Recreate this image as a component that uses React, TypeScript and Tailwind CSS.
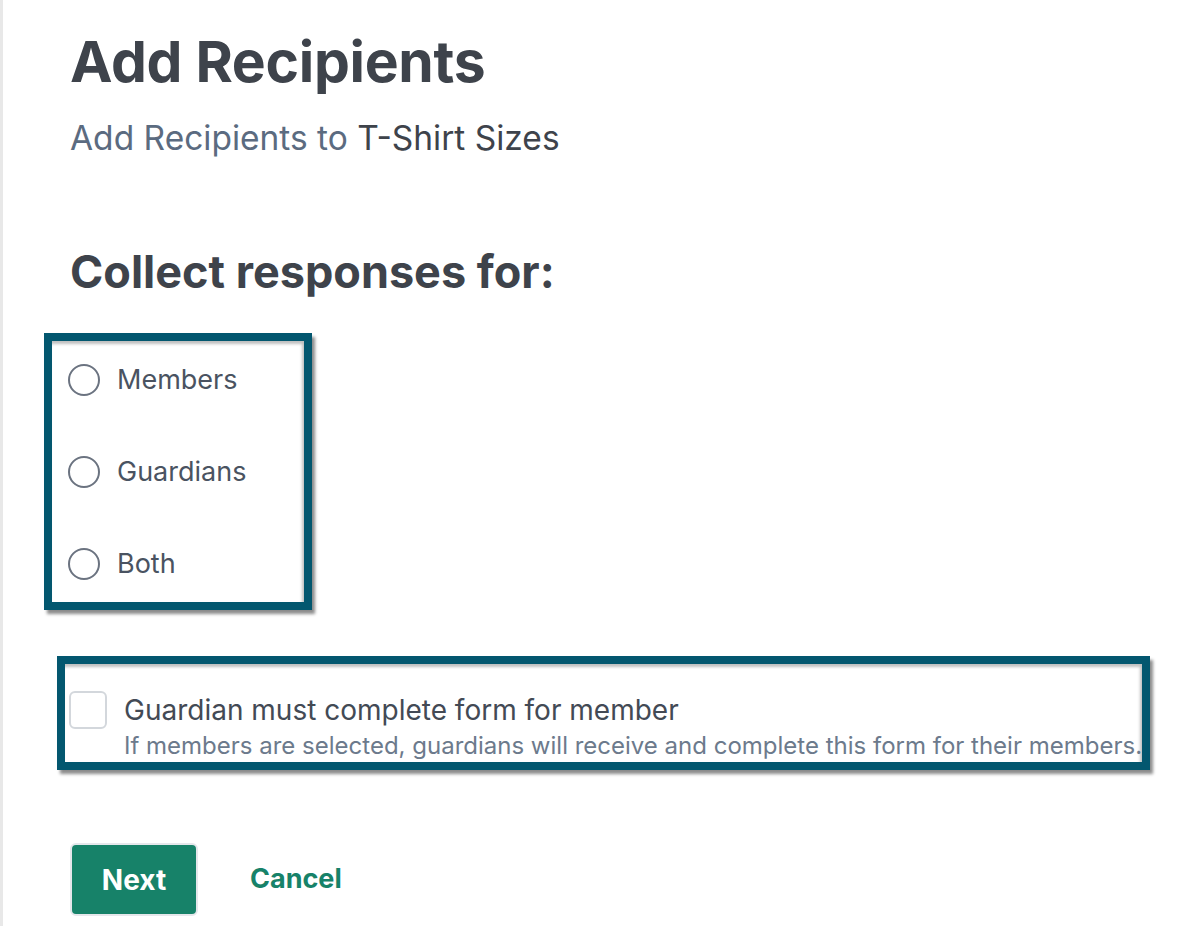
import React from 'react';

const font = { fontFamily: 'Inter, "Noto Sans", sans-serif' };

const options = ['Members', 'Guardians', 'Both'];

export default function App() {
    const [choice, setChoice] = React.useState<string | null>(null);
    const [guardian, setGuardian] = React.useState(false);

    return (
        <div className="min-h-[926px] w-[1186px] bg-white border-l-[3px] border-[#e8e8e8] text-[#3e434b]" style={font}>
            <div className="pl-[67px] pt-[26px]">
                {/* Header */}
                <h1 className="text-[57px] font-bold leading-[72px] tracking-[-0.3px]">Add Recipients</h1>
                <p className="mt-[20px] text-[33.5px] leading-[40px]">
                    <span className="text-[#5b6b80]">Add Recipients to</span> T-Shirt Sizes
                </p>

                <h2 className="mt-[87px] text-[45px] font-bold leading-[54px]">Collect responses for:</h2>

                {/* Radio group */}
                <div className="mt-[34px] -ml-[26px] w-[268px] border-[8px] border-[#03576f] shadow-[inset_-2px_3px_3px_rgba(0,0,0,0.25),3px_4px_3px_rgba(0,0,0,0.45)] pl-[16px] pt-[7px] pb-[6px] flex flex-col gap-[28px]">
                    {options.map(o => (
                        <label key={o} className="flex items-center gap-[17px] h-[64px] cursor-pointer" onClick={() => setChoice(o)}>
                            <span className="w-[32px] h-[32px] rounded-full border-2 border-[#6b7380] flex items-center justify-center">
                                {choice === o && <span className="w-[16px] h-[16px] rounded-full bg-[#178269]" />}
                            </span>
                            <span className="text-[27px] text-[#4a5361]">{o}</span>
                        </label>
                    ))}
                </div>

                {/* Guardian checkbox */}
                <div className="mt-[46px] -ml-[13px] w-[1093px] h-[114px] border-[8px] border-[#03576f] shadow-[inset_-2px_3px_3px_rgba(0,0,0,0.25),3px_4px_3px_rgba(0,0,0,0.45)] overflow-hidden">
                    <div className="flex gap-[17px] pl-[4px] pt-[26px]">
                        <button
                            onClick={() => setGuardian(g => !g)}
                            className="w-[38px] h-[38px] shrink-0 rounded-[6px] border-2 border-[#d3d7dc] bg-white mt-[1px] flex items-center justify-center"
                        >
                            {guardian && (
                                <svg width="22" height="22" viewBox="0 0 24 24" fill="none" stroke="#178269" strokeWidth="3" strokeLinecap="round" strokeLinejoin="round">
                                    <path d="M5 12l5 5L20 7" />
                                </svg>
                            )}
                        </button>
                        <div>
                            <div className="text-[28px] leading-[40px] text-[#434a55]">Guardian must complete form for member</div>
                            <div className="text-[24px] leading-[32px] text-[#6c7a8c] whitespace-nowrap">If members are selected, guardians will receive and complete this form for their members.</div>
                        </div>
                    </div>
                </div>

                {/* Actions */}
                <div className="mt-[73px] flex items-center gap-[52px]">
                    <button className="w-[128px] h-[73px] rounded-[6px] bg-[#178269] border-2 border-[#e5e7eb] text-white text-[28px] font-bold">Next</button>
                    <button className="text-[27px] font-bold text-[#178269]">Cancel</button>
                </div>
            </div>
        </div>
    );
}
